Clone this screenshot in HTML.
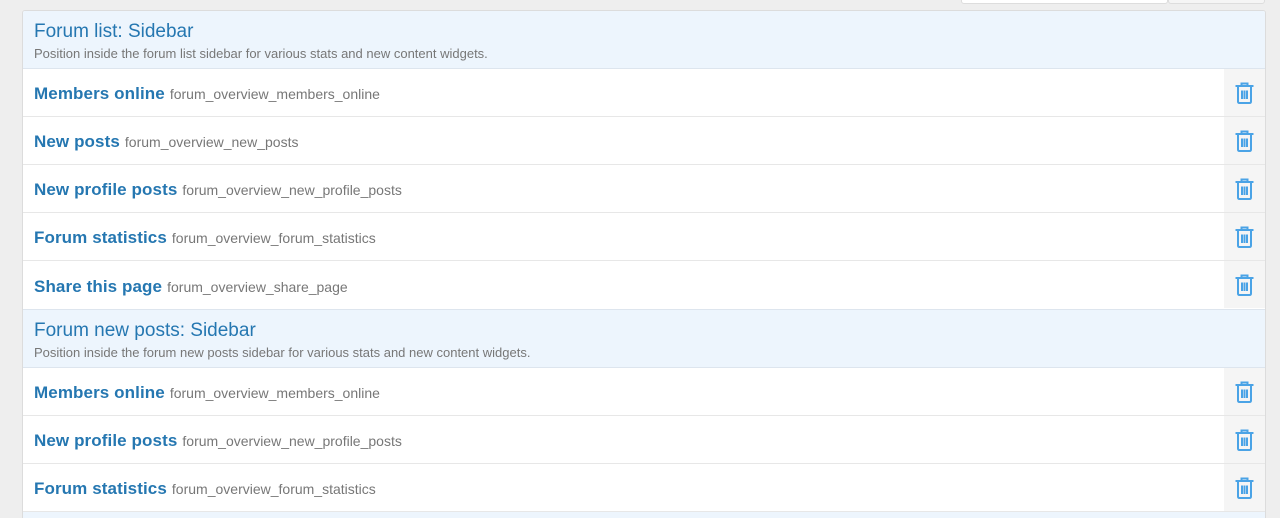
<!DOCTYPE html><html><head><style>
html,body{margin:0;height:518px;overflow:hidden}
body{background:#eee;font-family:"Liberation Sans",sans-serif;width:1280px;position:relative}
.top{position:absolute;left:961px;top:-4px;width:205px;height:6px;background:#fff;border:1px solid #ddd;border-radius:3px}
.top2{position:absolute;left:1168px;top:-4px;width:95px;height:6px;background:#f5f5f5;border:1px solid #ddd;border-radius:3px}
.box{position:absolute;left:22px;top:10px;width:1242px;height:520px;border:1px solid #dcdcdc;border-radius:3px;background:#fff;overflow:hidden}
.h{background:#edf5fd;height:58px;border-bottom:1px solid #dde5ee;box-sizing:border-box;padding:10px 0 0 11px}
.h .t{font-size:19px;color:#2577b1;line-height:22px}
.h .d{font-size:13px;color:#777;margin-top:3px}
.r{height:48px;border-bottom:1px solid #e7e7e7;box-sizing:border-box;display:flex;align-items:center;position:relative;padding-top:3px}
.r .n{padding-left:11px;font-size:17px;font-weight:bold;color:#2577b1;letter-spacing:0.1px}
.r .k{font-size:14px;color:#777;margin-left:5px}
.r .i{position:absolute;right:0;top:0;width:41px;height:47px;background:#f5f5f5;display:flex;align-items:center;justify-content:center}
</style></head><body>
<div class="top"></div><div class="top2"></div>
<div class="box">
<div class="h"><div class="t">Forum list: Sidebar</div><div class="d">Position inside the forum list sidebar for various stats and new content widgets.</div></div>
<div class="r"><span class="n">Members online</span><span class="k">forum_overview_members_online</span><div class="i">T</div></div>
<div class="r"><span class="n">New posts</span><span class="k">forum_overview_new_posts</span><div class="i">T</div></div>
<div class="r"><span class="n">New profile posts</span><span class="k">forum_overview_new_profile_posts</span><div class="i">T</div></div>
<div class="r"><span class="n">Forum statistics</span><span class="k">forum_overview_forum_statistics</span><div class="i">T</div></div>
<div class="r" style="border-bottom:none"><span class="n">Share this page</span><span class="k">forum_overview_share_page</span><div class="i">T</div></div>
<div class="h" style="height:59px;border-top:1px solid #dde5ee"><div class="t">Forum new posts: Sidebar</div><div class="d">Position inside the forum new posts sidebar for various stats and new content widgets.</div></div>
<div class="r"><span class="n">Members online</span><span class="k">forum_overview_members_online</span><div class="i">T</div></div>
<div class="r"><span class="n">New profile posts</span><span class="k">forum_overview_new_profile_posts</span><div class="i">T</div></div>
<div class="r"><span class="n">Forum statistics</span><span class="k">forum_overview_forum_statistics</span><div class="i">T</div></div>
<div class="h"></div>
</div>
<script>
var s='<svg width="19" height="22" viewBox="0 0 19 22" fill="none" stroke="#4aa3e6" stroke-width="2"><path d="M6.5 3.5V1.5h6v2"/><path d="M0.5 4h18"/><path d="M3 4.5v15q0 1.5 1.5 1.5h10q1.5 0 1.5-1.5v-15"/><path d="M7 8.5v8.5M9.5 8.5v8.5M12 8.5v8.5"/></svg>';
document.querySelectorAll('.i').forEach(function(e){e.innerHTML=s});
</script>
</body></html>
